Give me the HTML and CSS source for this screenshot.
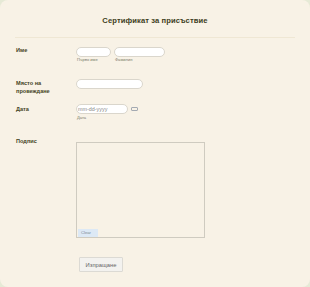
FILE: index.html
```html
<!DOCTYPE html>
<html lang="bg">
<head>
<meta charset="utf-8">
<link rel="stylesheet" href="styles.css">
</head>
<body>
<div class="card">
  <div class="header">
    <h1 class="title">Сертификат за присъствие</h1>
  </div>
  <div class="row row-name">
    <div class="label">Име</div>
    <div class="fields">
      <div class="field">
        <div class="input w-first"></div>
        <div class="sub">Първо име</div>
      </div>
      <div class="field">
        <div class="input w-last"></div>
        <div class="sub">Фамилия</div>
      </div>
    </div>
  </div>
  <div class="row row-place">
    <div class="label">Място на<br>провеждане</div>
    <div class="fields">
      <div class="input w-place"></div>
    </div>
  </div>
  <div class="row row-date">
    <div class="label">Дата</div>
    <div class="fields">
      <div class="field">
        <div class="date-line">
          <div class="input w-date"><span class="ph">mm-dd-yyyy</span></div>
          <span class="cal"></span>
        </div>
        <div class="sub">Дата</div>
      </div>
    </div>
  </div>
  <div class="row row-sign">
    <div class="label">Подпис</div>
    <div class="fields">
      <div class="sign">
        <span class="clear">Clear</span>
      </div>
    </div>
  </div>
  <div class="submit-row">
    <button class="submit">Изпращане</button>
  </div>
</div>
</body>
</html>
```
FILE: styles.css
```css
html, body {
  margin: 0;
  padding: 0;
  background: #e6ead6;
}
body {
  width: 310px;
  height: 287px;
  overflow: hidden;
  font-family: "Liberation Sans", Arial, sans-serif;
}
.card {
  box-sizing: border-box;
  width: 310px;
  height: 287px;
  background: #f8f2e6;
  border-radius: 8px;
  padding: 0 15px;
}
.header {
  height: 37px;
  border-bottom: 1px solid #efe7d4;
  display: flex;
  align-items: center;
  justify-content: center;
}
.title {
  margin: 3px 0 0 0;
  font-size: 7.6px;
  font-weight: bold;
  color: #3d3d22;
  letter-spacing: 0.1px;
}
.row {
  display: flex;
}
.label {
  width: 61px;
  padding-left: 1px;
  box-sizing: border-box;
  font-size: 5.6px;
  line-height: 8px;
  font-weight: bold;
  color: #45451f;
}
.fields {
  display: flex;
  gap: 3px;
}
.field {
  display: flex;
  flex-direction: column;
}
.input {
  box-sizing: border-box;
  height: 9.5px;
  background: #fff;
  border: 0.7px solid #dad6cc;
  border-radius: 5px;
}
.w-first { width: 35px; }
.w-last { width: 51px; }
.w-place { width: 67px; height: 10px; }
.w-date { width: 52px; height: 10px; display: flex; align-items: center; padding-left: 1px; }
.ph {
  font-size: 5.4px;
  color: #8a8a8a;
}
.sub {
  font-size: 4.1px;
  line-height: 5px;
  color: #7a7a6a;
  margin-top: 0.5px;
  padding-left: 1px;
}
.row-name { margin-top: 9px; }
.row-name .label { margin-top: -1px; }
.row-place { margin-top: 17px; }
.row-place .label { margin-top: 0; }
.row-date { margin-top: 9px; }
.row-date .label { margin-top: 1px; }
.date-line {
  display: flex;
  align-items: center;
}
.cal {
  display: inline-block;
  width: 5px;
  height: 1.4px;
  border: 0.6px solid #a4aab2;
  border-radius: 1px;
  margin-left: 3px;
}
.row-sign { margin-top: 22px; }
.row-sign .label { margin-top: -4.3px; }
.sign {
  box-sizing: border-box;
  width: 129px;
  height: 96px;
  border: 1px solid #cfcbc0;
  position: relative;
}
.clear {
  position: absolute;
  left: 1px;
  bottom: 0;
  width: 20px;
  height: 8px;
  background: #dde9f5;
  font-size: 4.2px;
  color: #7c8a96;
  line-height: 8px;
  padding-left: 3px;
  box-sizing: border-box;
}
.submit-row {
  margin-top: 15px;
  padding-left: 64px;
}
.submit {
  width: 44px;
  height: 15px;
  background: #f3f2ef;
  border: 0.7px solid #dcdad4;
  border-radius: 1px;
  font-family: "Liberation Sans", Arial, sans-serif;
  font-size: 5.8px;
  color: #666;
  padding: 0;
}
```
